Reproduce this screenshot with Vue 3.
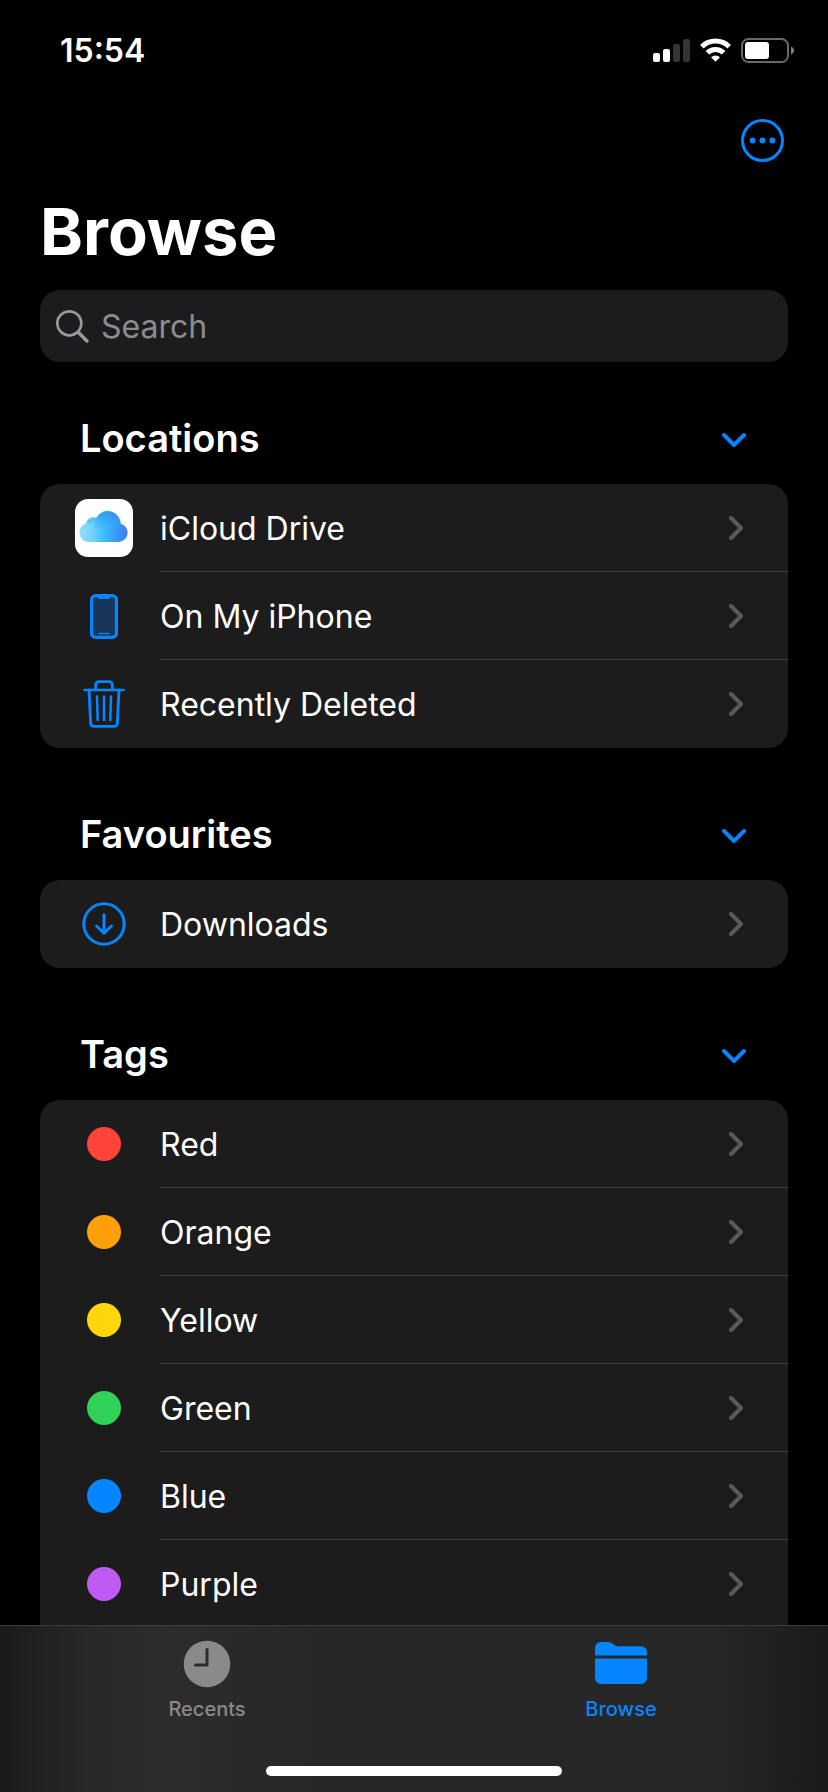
<script setup>
import { ref } from 'vue';

const search = ref('');
const activeTab = ref('browse');

const sections = ref([
  {
    key: 'locations',
    title: 'Locations',
    open: true,
    items: [
      { label: 'iCloud Drive', icon: 'icloud' },
      { label: 'On My iPhone', icon: 'phone' },
      { label: 'Recently Deleted', icon: 'trash' }
    ]
  },
  {
    key: 'favourites',
    title: 'Favourites',
    open: true,
    items: [{ label: 'Downloads', icon: 'download' }]
  },
  {
    key: 'tags',
    title: 'Tags',
    open: true,
    items: [
      { label: 'Red', color: '#ff453a' },
      { label: 'Orange', color: '#ff9f0a' },
      { label: 'Yellow', color: '#ffd60a' },
      { label: 'Green', color: '#30d158' },
      { label: 'Blue', color: '#0585ff' },
      { label: 'Purple', color: '#bf5af2' }
    ]
  }
]);
</script>

<template>
  <div class="screen">
    <header class="status-bar">
      <span class="status-time">15:54</span>
      <div class="status-icons">
        <svg width="37" height="23" viewBox="0 0 37 23" fill="#fff">
          <rect x="0" y="14" width="7" height="9" rx="2" />
          <rect x="10" y="10" width="7" height="13" rx="2" />
          <rect x="20" y="5" width="7" height="18" rx="2" fill="#343434" />
          <rect x="30" y="0" width="7" height="23" rx="2" fill="#343434" />
        </svg>
        <svg width="31" height="24" viewBox="0 0 31 24" fill="none" stroke="#fff" stroke-width="5">
          <path d="M1.8 8.7a19.5 19.5 0 0 1 27.4 0" />
          <path d="M7.4 14.8a11.6 11.6 0 0 1 16.2 0" />
          <path d="M11 19.3a6.6 6.6 0 0 1 9 0l-4.5 4.500z" fill="#fff" stroke="none" />
        </svg>
        <svg width="53" height="25" viewBox="0 0 53 25">
          <rect x="1" y="1" width="46" height="23" rx="6.5" fill="none" stroke="#696969" stroke-width="2" />
          <rect x="4" y="4" width="24" height="17" rx="3" fill="#fff" />
          <path d="M50 8.500c4 1.600 4 6.400 0 8z" fill="#808080" />
        </svg>
      </div>
    </header>

    <main class="content">
      <div class="toolbar">
        <button type="button" class="icon-button" aria-label="More">
          <svg width="43" height="43" viewBox="0 0 43 43" fill="#0585ff">
            <circle cx="21.5" cy="21.5" r="20" fill="none" stroke="#0585ff" stroke-width="3" />
            <circle cx="11.6" cy="21.5" r="3" />
            <circle cx="21.5" cy="21.5" r="3" />
            <circle cx="31.4" cy="21.5" r="3" />
          </svg>
        </button>
      </div>

      <h1 class="title">Browse</h1>

      <label class="search">
        <svg width="33" height="33" viewBox="0 0 33 33" fill="none" stroke="#98989f" stroke-linecap="round">
          <circle cx="13.3" cy="13.3" r="12" stroke-width="2.7" />
          <path d="M22.3 22.3l8.600 8.700" stroke-width="3.500" />
        </svg>
        <input v-model="search" class="search-input" type="search" placeholder="Search" aria-label="Search" />
      </label>

      <section v-for="section in sections" :key="section.key" class="section">
        <div class="section-header">
          <h2 class="section-title">{{ section.title }}</h2>
          <button
            type="button"
            class="icon-button"
            :aria-label="`Toggle ${section.title}`"
            :aria-expanded="section.open"
            @click="section.open = !section.open"
          >
            <svg width="24" height="18" viewBox="0 0 24 18" fill="none" stroke="#0585ff" stroke-width="4" stroke-linecap="round" stroke-linejoin="round">
              <path d="M2 6l10 10L22 6" />
            </svg>
          </button>
        </div>

        <ul v-show="section.open" class="card" :class="{ 'card--continued': section.key === 'tags' }">
          <li v-for="item in section.items" :key="item.label">
            <a href="#" class="row" @click.prevent>
              <span class="row-icon">
                <span v-if="item.color" class="tag-dot" :style="{ background: item.color }"></span>

                <svg v-else-if="item.icon === 'icloud'" width="58" height="58" viewBox="0 0 58 58">
                  <defs>
                    <linearGradient id="cloud" gradientUnits="userSpaceOnUse" x1="5" y1="34" x2="53" y2="34">
                      <stop offset="0" stop-color="#8edcf8" />
                      <stop offset="0.25" stop-color="#74d3fb" />
                      <stop offset="0.5" stop-color="#3fbcfe" />
                      <stop offset="0.76" stop-color="#3799f8" />
                      <stop offset="1" stop-color="#427cf5" />
                    </linearGradient>
                    <linearGradient id="cloud-top" x1="0" y1="0" x2="0" y2="1">
                      <stop offset="0" stop-color="#2f8cf0" stop-opacity="0.85" />
                      <stop offset="1" stop-color="#3fbcfe" stop-opacity="0" />
                    </linearGradient>
                    <linearGradient id="cloud-puff" x1="0" y1="0" x2="0.6" y2="1">
                      <stop offset="0" stop-color="#7bd2f4" />
                      <stop offset="0.6" stop-color="#58c0ee" />
                      <stop offset="1" stop-color="#74d3fb" stop-opacity="0" />
                    </linearGradient>
                  </defs>
                  <rect width="58" height="58" rx="13" fill="#fff" />
                  <path d="M14.5 43a9.500 9.500 0 0 1-3.600-18.500 7.600 7.600 0 0 1 10.200-5.800 13 13 0 0 1 24.500 6A9.300 9.300 0 0 1 44 43z" fill="url(#cloud)" />
                  <path d="M10.9 24.5a7.600 7.600 0 0 1 10.200-5.800 13 13 0 0 0-1.600 8.300q-4-4-8.600-2.500z" fill="url(#cloud-puff)" />
                  <path d="M19.5 27a13 13 0 1 1 26.100-2.300q-5 1.500-7 9.300H23z" fill="url(#cloud-top)" />
                </svg>

                <svg v-else-if="item.icon === 'phone'" width="28" height="45" viewBox="0 0 28 45">
                  <rect x="1.6" y="1.6" width="24.8" height="41.8" rx="4" fill="#183456" stroke="#0585ff" stroke-width="3.2" />
                  <path d="M8 2h12v1.500q0 1.500-1.500 1.500h-9Q8 5 8 3.500z" fill="#0585ff" />
                  <path d="M9 39.500h10" stroke="#0585ff" stroke-width="1.600" stroke-linecap="round" />
                </svg>

                <svg v-else-if="item.icon === 'trash'" width="42" height="48" viewBox="0 0 42 48" fill="none" stroke="#0585ff" stroke-width="2.9" stroke-linecap="round" stroke-linejoin="round">
                  <path d="M1.5 10h39" stroke-width="2.600" />
                  <path d="M12.7 10V5.200q0-3.600 3.600-3.600h9.400q3.600 0 3.600 3.600V10" />
                  <path d="M6 10l1.700 33.200q.2 3.200 3.200 3.200h20.200q3 0 3.200-3.200L36 10" />
                  <path d="M14 16.500l.7 23.500M21 16.500V40M28 16.500L27.300 40" stroke-width="2.500" />
                </svg>

                <svg v-else width="44" height="44" viewBox="0 0 44 44" fill="none" stroke="#0585ff" stroke-width="3" stroke-linecap="round" stroke-linejoin="round">
                  <circle cx="22" cy="22" r="20.2" />
                  <path d="M22 12.800v18.400M14.500 24l7.500 7.300L29.500 24" />
                </svg>
              </span>
              <span class="row-body">
                <span>{{ item.label }}</span>
                <svg width="14" height="24" viewBox="0 0 14 24" fill="none" stroke="#5a5a5e" stroke-width="4" stroke-linecap="round" stroke-linejoin="round">
                  <path d="M2 2l10 10L2 22" />
                </svg>
              </span>
            </a>
          </li>
        </ul>
      </section>
    </main>

    <footer class="tab-bar">
      <nav class="tabs">
        <button
          type="button"
          class="tab-button"
          :class="{ 'tab-button--active': activeTab === 'recents' }"
          @click="activeTab = 'recents'"
        >
          <svg width="48" height="48" viewBox="0 0 48 48">
            <circle cx="24" cy="24" r="23.3" fill="currentColor" />
            <path d="M24 9.500V25H12.500" fill="none" stroke="#2c2c2c" stroke-width="3" stroke-linecap="round" stroke-linejoin="round" />
          </svg>
          <span>Recents</span>
        </button>
        <button
          type="button"
          class="tab-button"
          :class="{ 'tab-button--active': activeTab === 'browse' }"
          @click="activeTab = 'browse'"
        >
          <svg width="52" height="48" viewBox="0 0 52 48" fill="currentColor">
            <path d="M0 15.500V8.500Q0 2 6.500 2H13q2.600 0 4.600 1.600l1.400 1.200q1.800 1.400 3.600 1.400h22.900q6.500 0 6.500 6.500v2.800z" />
            <path d="M0 18.500h52v19q0 6.500-6.500 6.500h-39Q0 44 0 37.500z" />
          </svg>
          <span>Browse</span>
        </button>
      </nav>
      <div class="home-indicator"></div>
    </footer>
  </div>
</template>

<style>
body {
  background: #000;
}
</style>

<style scoped>
.screen {
  display: flex;
  flex-direction: column;
  height: 100vh;
  background: #000;
  color: #fff;
  font-family: Inter, "Liberation Sans", sans-serif;
}

svg {
  display: block;
  flex: none;
}

.status-bar {
  flex: none;
  display: flex;
  align-items: center;
  justify-content: space-between;
  height: 100px;
  padding: 0 34px 0 60px;
}

.status-time {
  font-size: 32px;
  font-weight: 600;
}

.status-icons {
  display: flex;
  align-items: center;
  gap: 10px;
}

.content {
  flex: 1;
  min-height: 0;
  padding: 0 40px;
  overflow-y: auto;
  scrollbar-width: none;
}

.toolbar {
  display: flex;
  align-items: center;
  justify-content: flex-end;
  height: 80px;
  padding-right: 4px;
}

.icon-button {
  padding: 0;
  border: 0;
  background: none;
  cursor: pointer;
}

.title {
  margin: 12px 0 18px;
  font-size: 65px;
  font-weight: 700;
  line-height: 80px;
}

.search {
  display: flex;
  align-items: center;
  gap: 12px;
  height: 72px;
  padding: 0 16px;
  border-radius: 20px;
  background: #1c1c1e;
}

.search-input {
  flex: 1;
  min-width: 0;
  padding: 0;
  border: 0;
  outline: 0;
  background: none;
  color: #fff;
  font: inherit;
  font-size: 32px;
  appearance: none;
}

.search-input::placeholder {
  color: #8c8c8f;
  opacity: 1;
}

.section {
  margin-top: 40px;
}

.search + .section {
  margin-top: 30px;
}

.section-header {
  display: flex;
  align-items: center;
  justify-content: space-between;
  height: 92px;
  padding: 0 42px 0 40px;
}

.section-title {
  margin: 0;
  font-size: 38px;
  font-weight: 600;
}

.card {
  margin: 0;
  padding: 0;
  list-style: none;
  border-radius: 20px;
  background: #1c1c1c;
}

.card--continued {
  border-radius: 20px 20px 0 0;
}

.row {
  display: flex;
  height: 88px;
  padding-left: 24px;
  color: inherit;
  font-size: 32px;
  text-decoration: none;
}

.row-icon {
  flex: none;
  display: flex;
  align-items: center;
  justify-content: center;
  width: 80px;
  margin-right: 16px;
}

.tag-dot {
  width: 34px;
  height: 34px;
  border-radius: 50%;
}

.row-body {
  flex: 1;
  display: flex;
  align-items: center;
  justify-content: space-between;
  padding-right: 45px;
  box-shadow: inset 0 -1px #3e3e40;
}

li:last-child .row-body {
  box-shadow: none;
}

.tab-bar {
  flex: none;
  border-top: 1px solid #3c3c3c;
  background: linear-gradient(90deg, #1a1a1a 0, #1d1d1d 2%, #292929 11%, #2c2c2c 20%, #272727 40%, #272727 86%, #1a1a1a 100%);
}

.tabs {
  display: flex;
}

.tab-button {
  flex: 1;
  display: flex;
  flex-direction: column;
  align-items: center;
  gap: 9px;
  padding: 14px 0 45px;
  border: 0;
  background: none;
  color: #8a8a8a;
  font: inherit;
  font-size: 20px;
  font-weight: 500;
  line-height: 24px;
  cursor: pointer;
}

.tab-button--active {
  color: #0585ff;
}

.home-indicator {
  width: 296px;
  height: 10px;
  margin: 0 auto 16px;
  border-radius: 5px;
  background: #fff;
}
</style>
